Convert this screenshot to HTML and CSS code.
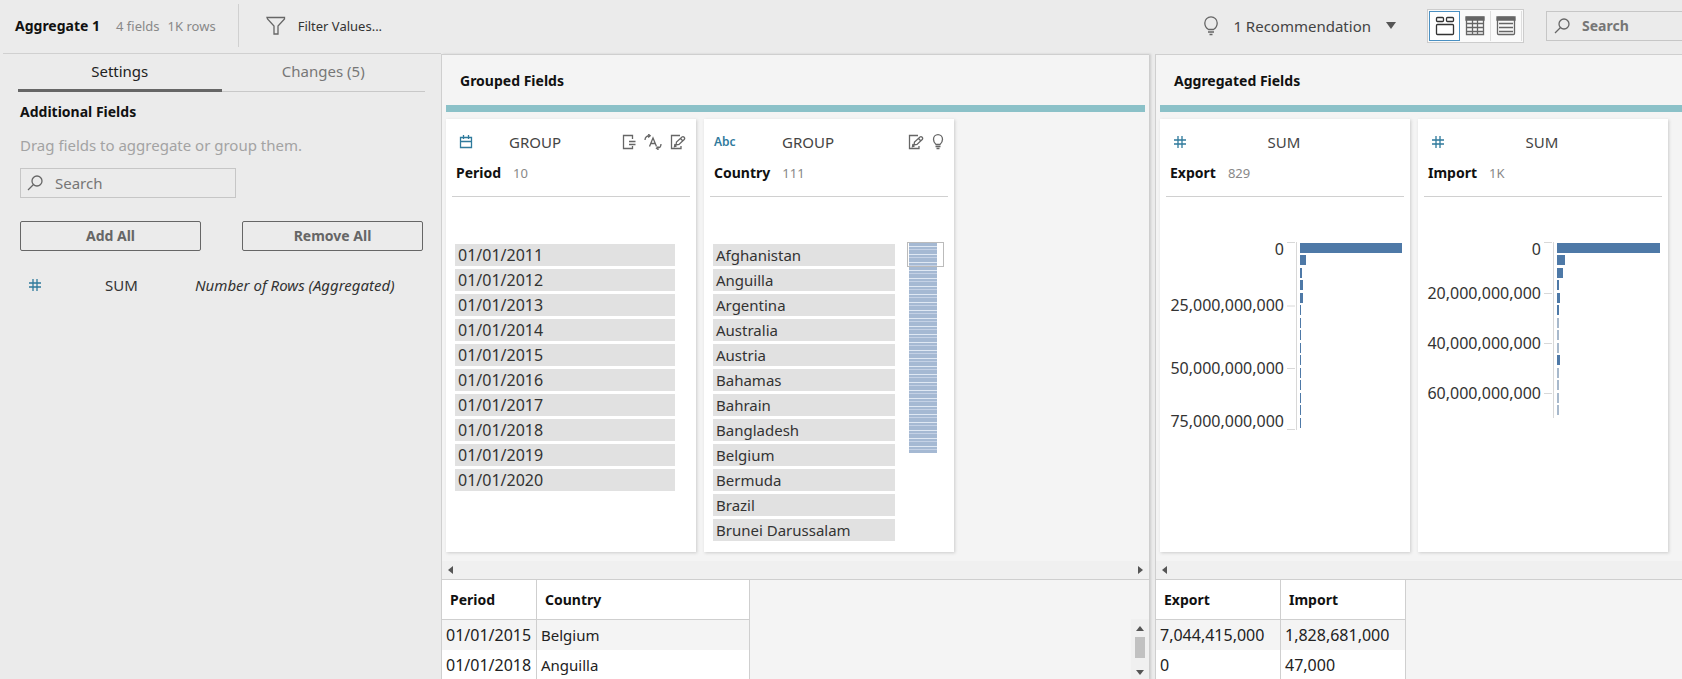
FILE: index.html
```
<!DOCTYPE html>
<html lang="en">
<head>
<meta charset="utf-8">
<title>Aggregate 1</title>
<link rel="stylesheet" href="styles.css">
</head>
<body>
<svg class="defs" aria-hidden="true">
  <symbol id="hash" viewBox="0 0 14 14"><path d="M5 1v12M9 1v12M1 5h12M1 9h12"/></symbol>
  <symbol id="search" viewBox="0 0 16 16"><circle cx="10" cy="6" r="5"/><path d="M6.500 9.500L1 15"/></symbol>
  <symbol id="bulb" viewBox="0 0 14 20"><path d="M4.500 13.500C2 12 .8 9.500 .8 7a6.200 6.200 0 0 1 12.400 0c0 2.500-1.200 5-3.700 6.500zM4 16h6M5.500 18.500h3"/></symbol>
  <symbol id="bulb-small" viewBox="0 0 12 16"><path d="M4 10.500C2.200 9 1.500 7 1.500 5.200a4.400 4.400 0 0 1 9 0c0 1.800-.7 3.800-2.500 5.300zM3.500 12.500h5M4.500 14.500h3"/></symbol>
  <symbol id="edit" viewBox="0 0 16 16"><path d="M10 1.500H1.500v13h9.500v-2.500M6 11l.5-3L12 3c1.500-1 3.500 1 2.200 2.500L9 10.500zM10.500 4.500l2.200 2.200M5 10l-.5 2.500 2-.5"/></symbol>
  <symbol id="left" viewBox="0 0 6 8"><path d="M5 0v8L0 4z"/></symbol>
</svg>
<div class="app">
  <header class="topbar">
    <h1 class="step-name">Aggregate 1</h1>
    <span class="stat">4 fields</span>
    <span class="stat">1K rows</span>
    <span class="divider"></span>
    <button class="plain filter" type="button">
      <svg class="icon" width="20" height="20" viewBox="0 0 20 20" aria-hidden="true"><path d="M1 1.500h17.500v1.500L12 10v8H8V10L1.500 3z"/></svg>
      Filter Values...
    </button>
    <button class="plain recommend" type="button">
      <svg class="icon" width="14" height="20" aria-hidden="true"><use href="#bulb"/></svg>
      1 Recommendation
      <svg class="solid" width="10" height="7" viewBox="0 0 10 7" aria-hidden="true"><path d="M0 0h10L5 7z"/></svg>
    </button>
    <div class="views">
      <button class="view active" type="button" aria-label="Profile and data view">
        <svg class="icon dark" width="20" height="20" viewBox="0 0 20 20"><rect x="1.500" y="1.500" width="7" height="4" rx="1"/><rect x="11.500" y="1.500" width="7" height="4" rx="1"/><rect x="1.500" y="8.500" width="17" height="10" rx="1"/></svg>
      </button>
      <button class="view" type="button" aria-label="Data grid view">
        <svg class="icon" width="20" height="20" viewBox="0 0 20 20"><path class="fill" d="M1 1h18v3H1z"/><path d="M1.500 1.500h17v17h-17zM1 7.500h18M1 11.500h18M1 15.500h18M7.500 4v15M12.500 4v15"/></svg>
      </button>
      <button class="view" type="button" aria-label="List view">
        <svg class="icon" width="20" height="20" viewBox="0 0 20 20"><path class="fill" d="M1 1h18v3H1z"/><rect x="1.500" y="1.500" width="17" height="17" rx="1"/><path d="M3 7.500h14M3 11.500h14M3 15.500h14"/></svg>
      </button>
    </div>
    <label class="search top-search">
      <svg class="icon" width="16" height="16" aria-hidden="true"><use href="#search"/></svg>
      <input type="text" placeholder="Search" aria-label="Search fields">
    </label>
  </header>

  <div class="workspace">
    <aside class="settings">
      <div class="tabs" role="tablist">
        <button class="tab selected" type="button" role="tab">Settings</button>
        <button class="tab" type="button" role="tab">Changes (5)</button>
      </div>
      <div class="settings-body">
        <h2 class="heading">Additional Fields</h2>
        <p class="hint">Drag fields to aggregate or group them.</p>
        <label class="search side-search">
          <svg class="icon" width="16" height="16" aria-hidden="true"><use href="#search"/></svg>
          <input type="text" placeholder="Search" aria-label="Search additional fields">
        </label>
        <div class="actions-row">
          <button class="outline" type="button">Add All</button>
          <button class="outline" type="button">Remove All</button>
        </div>
        <div class="extra-field">
          <svg class="icon blue" width="14" height="14" aria-hidden="true"><use href="#hash"/></svg>
          <span class="agg">SUM</span>
          <em>Number of Rows (Aggregated)</em>
        </div>
      </div>
    </aside>

    <section class="panel grouped">
      <div class="profile">
        <h2 class="heading panel-title">Grouped Fields</h2>
        <div class="cards">
          <article class="card">
            <div class="card-head">
              <div class="card-top">
                <span class="type"><svg class="icon blue" width="14" height="14" viewBox="0 0 14 14"><path d="M1.500 2.500h11v10h-11zM1 6.500h12M4.500 0v4M9.500 0v4"/></svg></span>
                <span class="role">GROUP</span>
                <span class="tools">
                  <svg class="icon" width="16" height="16" viewBox="0 0 16 16"><path d="M12.500 5V1.500h-9v13h9V12M9 7.500h6.500M9 10.500h6.500"/></svg>
                  <svg class="icon" width="18" height="16" viewBox="0 0 18 16"><path d="M5.500 12.500L9 4l3.500 8.500M6.700 9.500h4.600M1 6c0-3 2-4.500 5-4.200M4.200 0l2 1.800-2 1.700M17 10c0 3-2 4.200-4.500 4.200M14.500 12.400l-2 1.800 2 1.600"/></svg>
                  <svg class="icon" width="16" height="16"><use href="#edit"/></svg>
                </span>
              </div>
              <h3 class="heading field">Period <span class="count">10</span></h3>
            </div>
            <ul class="values numeric">
              <li>01/01/2011</li><li>01/01/2012</li><li>01/01/2013</li><li>01/01/2014</li><li>01/01/2015</li>
              <li>01/01/2016</li><li>01/01/2017</li><li>01/01/2018</li><li>01/01/2019</li><li>01/01/2020</li>
            </ul>
          </article>
          <article class="card">
            <div class="card-head">
              <div class="card-top">
                <span class="type text">Abc</span>
                <span class="role">GROUP</span>
                <span class="tools">
                  <svg class="icon" width="16" height="16"><use href="#edit"/></svg>
                  <svg class="icon" width="12" height="16"><use href="#bulb-small"/></svg>
                </span>
              </div>
              <h3 class="heading field">Country <span class="count">111</span></h3>
            </div>
            <div class="value-area">
              <ul class="values">
                <li>Afghanistan</li><li>Anguilla</li><li>Argentina</li><li>Australia</li><li>Austria</li><li>Bahamas</li>
                <li>Bahrain</li><li>Bangladesh</li><li>Belgium</li><li>Bermuda</li><li>Brazil</li><li>Brunei Darussalam</li>
              </ul>
              <div class="minimap"><span class="viewport"></span></div>
            </div>
          </article>
        </div>
      </div>
      <div class="hscroll">
        <svg class="solid" width="6" height="8"><use href="#left"/></svg>
        <svg class="solid" width="6" height="8" viewBox="0 0 6 8"><path d="M1 0v8l5-4z"/></svg>
      </div>
      <div class="grid-area">
        <table class="data">
          <thead><tr><th class="col-date">Period</th><th class="col-name">Country</th></tr></thead>
          <tbody>
            <tr><td class="numeric">01/01/2015</td><td>Belgium</td></tr>
            <tr><td class="numeric">01/01/2018</td><td>Anguilla</td></tr>
          </tbody>
        </table>
        <div class="vscroll">
          <svg class="solid" width="8" height="5" viewBox="0 0 8 5"><path d="M0 5h8L4 0z"/></svg>
          <span class="thumb"></span>
          <svg class="solid" width="8" height="5" viewBox="0 0 8 5"><path d="M0 0h8L4 5z"/></svg>
        </div>
      </div>
    </section>

    <section class="panel aggregated">
      <div class="profile">
        <h2 class="heading panel-title">Aggregated Fields</h2>
        <div class="cards">
          <article class="card">
            <div class="card-head">
              <div class="card-top">
                <span class="type"><svg class="icon blue" width="14" height="14"><use href="#hash"/></svg></span>
                <span class="role">SUM</span>
              </div>
              <h3 class="heading field">Export <span class="count">829</span></h3>
            </div>
            <svg class="chart" width="250" height="250" viewBox="0 0 250 250" role="img" aria-label="Export distribution">
              <path class="axis" d="M136.500 45v188M127 45.500h8M127 109h8M127 171.500h8M127 232.500h8"/>
              <g class="labels">
                <text x="124" y="58">0</text><text x="124" y="114">25,000,000,000</text><text x="124" y="177">50,000,000,000</text><text x="124" y="230">75,000,000,000</text>
              </g>
              <path class="bars" d="M140 46h102v10h-102zM140 58h6v10h-6zM140 71h2v10h-2zM140 83h3v10h-3zM140 96h3v10h-3zM140 108h1v10h-1zM140 121h1v10h-1zM140 133h1v10h-1zM140 146h1v10h-1zM140 158h1v10h-1zM140 171h1v10h-1zM140 183h1v10h-1zM140 196h1v10h-1zM140 208h1v10h-1zM140 221h1v10h-1z"/>
            </svg>
          </article>
          <article class="card">
            <div class="card-head">
              <div class="card-top">
                <span class="type"><svg class="icon blue" width="14" height="14"><use href="#hash"/></svg></span>
                <span class="role">SUM</span>
              </div>
              <h3 class="heading field">Import <span class="count">1K</span></h3>
            </div>
            <svg class="chart" width="250" height="250" viewBox="0 0 250 250" role="img" aria-label="Import distribution">
              <path class="axis" d="M135.500 45v176M126 45.500h8M126 96.500h8M126 146.500h8M126 196.500h8"/>
              <g class="labels">
                <text x="123" y="58">0</text><text x="123" y="102">20,000,000,000</text><text x="123" y="152">40,000,000,000</text><text x="123" y="202">60,000,000,000</text>
              </g>
              <path class="bars" d="M139 46h103v10h-103zM139 58h8v10h-8zM139 71h6v10h-6zM139 83h2v10h-2zM139 96h3v10h-3zM139 108h2v10h-2zM139 158h3v10h-3z"/>
              <path class="bars pale" d="M139 121h2v10h-2zM139 133h2v10h-2zM139 146h2v10h-2zM139 171h2v10h-2zM139 183h2v10h-2zM139 196h2v10h-2zM139 208h2v10h-2z"/>
            </svg>
          </article>
        </div>
      </div>
      <div class="hscroll">
        <svg class="solid" width="6" height="8"><use href="#left"/></svg>
      </div>
      <div class="grid-area">
        <table class="data">
          <thead><tr><th class="col-num">Export</th><th class="col-num">Import</th></tr></thead>
          <tbody>
            <tr><td class="numeric">7,044,415,000</td><td class="numeric">1,828,681,000</td></tr>
            <tr><td class="numeric">0</td><td class="numeric">47,000</td></tr>
          </tbody>
        </table>
      </div>
    </section>
  </div>
</div>
</body>
</html>
```
FILE: styles.css
```
* { box-sizing: border-box; }
body {
  margin: 0;
  background: #ebebeb;
  color: #333;
  font: 15px/20px "Noto Sans", "Open Sans", sans-serif;
}
h1, h2, h3, p, ul { margin: 0; padding: 0; }
button, input { font: inherit; color: inherit; }
button { cursor: pointer; }
.defs { position: absolute; width: 0; height: 0; }
.icon { fill: none; stroke: #666; stroke-width: 1.3; flex: none; }
.icon.dark { stroke: #333; }
.icon .fill { fill: #666; }
.icon.blue { stroke: #2f7a9c; }
.solid { fill: #555; flex: none; }

.app { display: flex; flex-direction: column; height: 100vh; overflow: hidden; }

.topbar { display: flex; align-items: center; height: 51px; padding-left: 15px; white-space: nowrap; flex: none; }
.step-name { font-size: 14px; font-weight: 700; line-height: 20px; color: #111; margin-right: 8px; }
.stat { font-size: 13px; color: #888; margin-left: 8px; }
.divider { width: 1px; height: 43px; background: #d0d0d0; margin: 0 27px 0 22px; }
.plain { display: flex; align-items: center; background: none; border: 0; padding: 0; }
.filter { gap: 12px; font-size: 13px; }
.recommend { gap: 15px; margin-left: auto; color: #444; }
.views { display: flex; margin: 0 22px 0 31px; border: 1px solid #ccc; background: #fafafa; padding: 1px; flex: none; }
.view { display: flex; align-items: center; justify-content: center; width: 31px; height: 30px; padding: 0; background: #fafafa; border: 0; border-right: 1px solid #ddd; }
.view.active { border: 1px solid #4a90c2; background: #fff; }

.search { display: flex; align-items: center; gap: 12px; height: 30px; border: 1px solid #c6c6c6; padding-left: 6px; }
.search input { flex: 1; min-width: 0; border: 0; padding: 0; background: transparent; outline: 0; }
.search input::placeholder { color: #767676; opacity: 1; }
.top-search { width: 136px; border-right: 0; padding-left: 7px; flex: none; }
.top-search input { font-size: 14px; font-weight: 700; }

.workspace { flex: 1; min-height: 0; display: grid; grid-template-columns: 441px minmax(0, 714fr) minmax(0, 527fr); }

.settings { padding: 0 0 0 3px; }
.tabs { display: flex; border-top: 1px solid #d0d0d0; margin-top: 2px; padding: 0 16px 0 15px; }
.tab { flex: 1; height: 38px; padding: 0 0 3px; border: 0; border-bottom: 1px solid #c8c8c8; background: none; color: #777; }
.tab.selected { border-bottom: 3px solid #666; padding: 0 0 2px; color: #222; }
.settings-body { padding: 10px 18px 0 17px; }
.heading { font-size: 14px; font-weight: 700; line-height: 20px; color: #111; }
.hint { margin-top: 13px; color: #a3a3a3; }
.side-search { width: 216px; margin-top: 13px; }
.actions-row { display: grid; grid-template-columns: 1fr 1fr; gap: 41px; margin-top: 23px; }
.outline { height: 30px; padding: 0; border: 1px solid #666; border-radius: 2px; background: none; color: #666; font-size: 14px; font-weight: 700; }
.extra-field { display: flex; align-items: center; margin-top: 24px; padding-left: 8px; white-space: nowrap; }
.agg { width: 90px; margin: 0 0 0 63px; }

.panel { display: flex; flex-direction: column; min-width: 0; margin-top: 3px; background: #f4f4f4; border: 1px solid #cfcfcf; border-right: 0; border-bottom: 0; }
.grouped { margin-right: 6px; box-shadow: 2px 0 2px #ccc; }
.profile { padding: 16px 4px 9px; }
.aggregated .profile { padding-right: 0; }
.panel-title { padding: 0 14px 14px; border-bottom: 7px solid #8bc1c8; }
.cards { display: flex; gap: 8px; margin-top: 7px; }
.card { width: 250px; min-height: 433px; background: #fff; box-shadow: 1px 1px 3px #ccc; flex: none; }
.card-head { margin: 0 6px; padding: 13px 0 13px; border-bottom: 1px solid #d0d0d0; }
.card-top { display: flex; align-items: center; height: 20px; }
.type { display: flex; width: 26px; padding-left: 7px; color: #2f7a9c; font-size: 12px; font-weight: 600; flex: none; }
.type.text { padding-left: 4px; }
.role { flex: 1; text-align: center; padding-right: 28px; color: #444; }
.tools { display: flex; align-items: center; gap: 8px; margin-right: 4px; }
.field { display: flex; gap: 12px; margin-top: 11px; padding-left: 4px; }
.count { font-size: 13px; font-weight: 400; color: #888; }
.values { list-style: none; margin: 47px 0 11px 9px; width: 220px; display: grid; gap: 3px; }
.values li { height: 22px; line-height: 22px; padding-left: 3px; background: #e1e1e1; }
.numeric { font-size: 16px; }
.value-area { display: flex; }
.value-area .values { width: 182px; margin-left: 9px; }
.minimap { position: relative; width: 28px; height: 210px; margin: 46px 0 0 14px; background: repeating-linear-gradient(#a5b9d3 0 3px, #dfe8f3 3px 4px, #a5b9d3 4px 6px, #c4d1e5 6px 7px, #a5b9d3 7px 8px); }
.viewport { position: absolute; top: -1px; left: -2px; width: 37px; height: 25px; border: 1px solid #bbb; }

.chart { display: block; }
.axis { fill: none; stroke: #d8d8d8; }
.labels { fill: #333; font-size: 16px; text-anchor: end; }
.bars { fill: #4e79a7; }
.bars.pale { fill: #a8b9cc; }

.hscroll { display: flex; align-items: center; justify-content: space-between; height: 19px; padding: 0 6px; background: #f0f0f0; border-bottom: 1px solid #cfcfcf; flex: none; }
.grid-area { display: flex; justify-content: space-between; align-items: flex-start; flex: 1; min-height: 0; }
.data { border-collapse: separate; border-spacing: 0; background: #fff; table-layout: fixed; }
.data th, .data td { border-right: 1px solid #cfcfcf; text-align: left; white-space: nowrap; }
.data th { height: 40px; padding: 0 8px; border-bottom: 1px solid #cfcfcf; font-size: 14px; font-weight: 700; color: #111; }
.data td { height: 30px; padding: 0 4px; color: #222; }
.data tbody tr:nth-child(odd) { background: #f4f4f4; }
.col-date { width: 95px; }
.col-name { width: 213px; }
.col-num { width: 125px; }
.vscroll { display: flex; flex-direction: column; align-items: center; justify-content: space-between; width: 18px; height: 60px; margin-top: 39px; padding: 7px 0 4px; background: #f0f0f0; }
.thumb { width: 10px; height: 21px; margin-bottom: 7px; background: #c1c1c1; }
```
